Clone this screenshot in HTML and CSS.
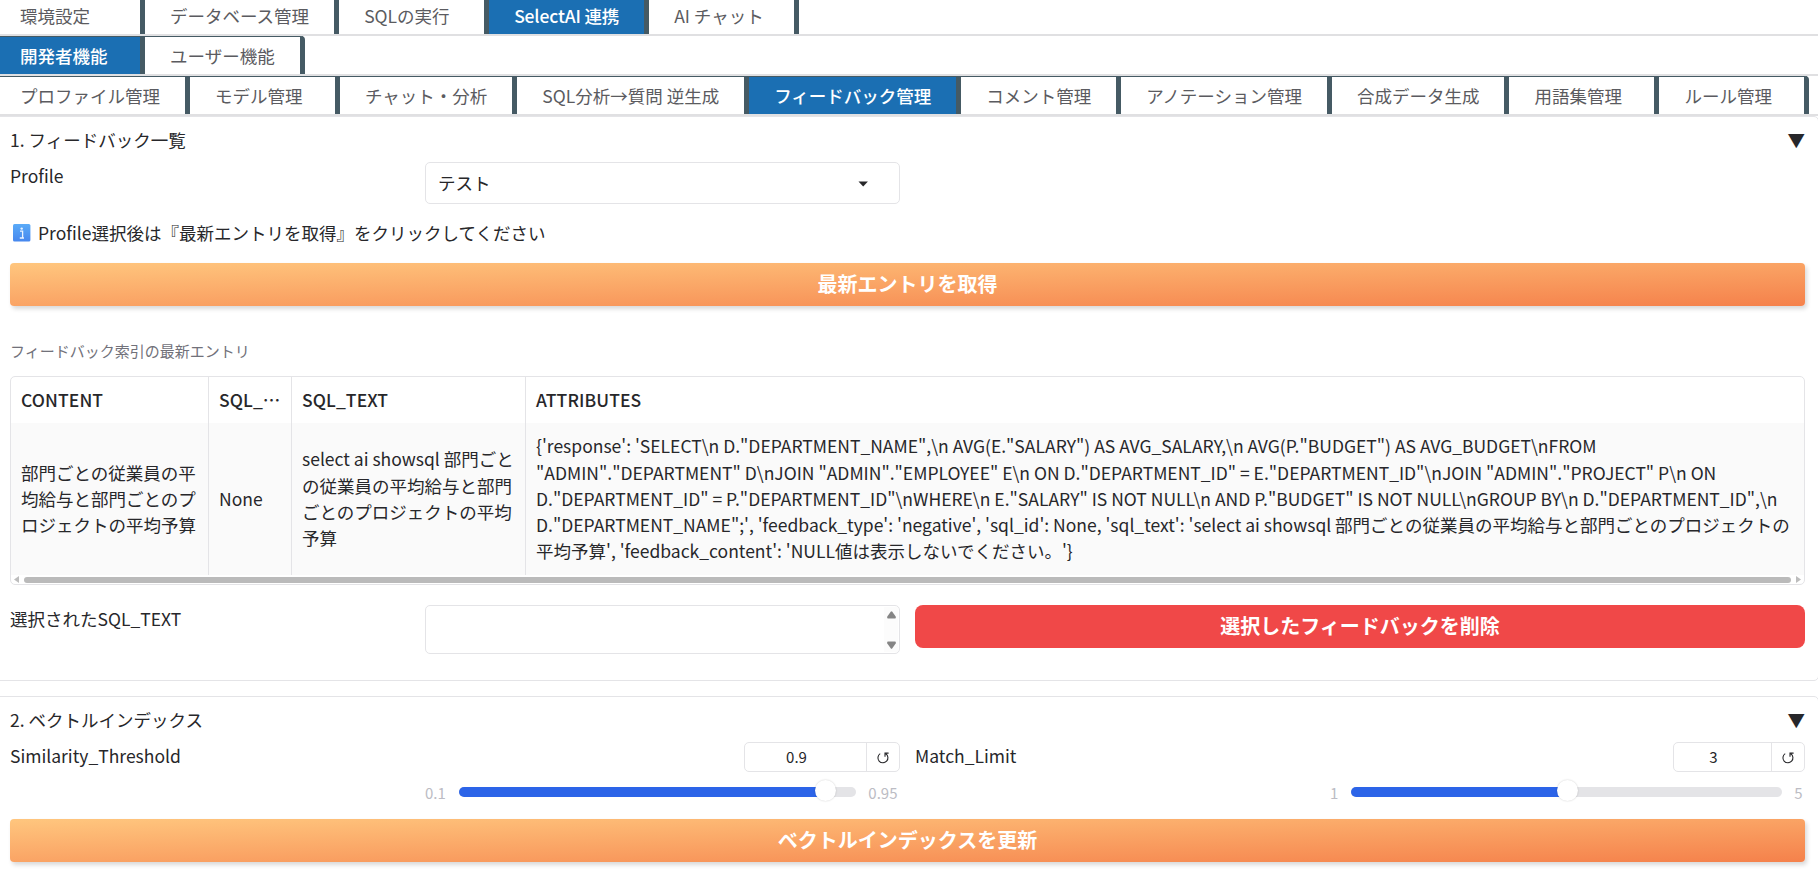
FILE: index.html
```html
<!DOCTYPE html>
<html lang="ja">
<head>
  <meta charset="UTF-8" />
  <meta name="viewport" content="width=device-width, initial-scale=1.0"/>
  <title>SelectAI 連携</title>
  <link rel="stylesheet" href="styles.css">
</head>
<body>
  <div class="app">
    <nav class="tabs first">
      <button class="tab">環境設定</button>
      <button class="tab">データベース管理</button>
      <button class="tab">SQLの実行</button>
      <button class="tab selected">SelectAI 連携</button>
      <button class="tab">AI チャット</button>
    </nav>
    <nav class="tabs">
      <button class="tab selected">開発者機能</button>
      <button class="tab">ユーザー機能</button>
    </nav>
    <nav class="tabs">
      <button class="tab">プロファイル管理</button>
      <button class="tab">モデル管理</button>
      <button class="tab">チャット・分析</button>
      <button class="tab">SQL分析→質問 逆生成</button>
      <button class="tab selected">フィードバック管理</button>
      <button class="tab">コメント管理</button>
      <button class="tab">アノテーション管理</button>
      <button class="tab">合成データ生成</button>
      <button class="tab">用語集管理</button>
      <button class="tab">ルール管理</button>
    </nav>

    <section class="accordion feedback">
      <div class="accordion-head"><span>1. フィードバック一覧</span><span class="arrow">▼</span></div>

      <div class="columns">
        <div class="field">
          <label>Profile</label>
          <div class="dropdown">
            <span>テスト</span>
            <svg class="caret" width="11" height="6" viewBox="0 0 11 6"><path d="M0.5 0.5h9.4L5.2 5.4z" fill="#27272a"/></svg>
          </div>
        </div>
      </div>

      <p class="note">
        <svg class="info" width="18" height="18" viewBox="0 0 18 18">
          <defs>
            <linearGradient id="infoBg" x1="0" y1="0" x2="0" y2="1">
              <stop offset="0" stop-color="#5aabf8"/>
              <stop offset="1" stop-color="#4687ee"/>
            </linearGradient>
          </defs>
          <rect width="17.4" height="17.4" rx="1.5" fill="url(#infoBg)"/>
          <circle cx="8.7" cy="4.6" r="1.2" fill="#eaf3ff"/>
          <path d="M7 7.2h2.6v6.4M6.8 14h4.2" fill="none" stroke="#eaf3ff" stroke-width="1.3"/>
        </svg>
        <span>Profile選択後は『最新エントリを取得』をクリックしてください</span>
      </p>

      <button class="btn primary">最新エントリを取得</button>

      <div class="caption">フィードバック索引の最新エントリ</div>
      <div class="table-wrap">
        <table>
          <colgroup>
            <col class="c1"><col class="c2"><col class="c3"><col>
          </colgroup>
          <thead>
            <tr><th>CONTENT</th><th>SQL_⋯</th><th>SQL_TEXT</th><th>ATTRIBUTES</th></tr>
          </thead>
          <tbody>
            <tr>
              <td>部門ごとの従業員の平均給与と部門ごとのプロジェクトの平均予算</td>
              <td>None</td>
              <td>select ai showsql 部門ごとの従業員の平均給与と部門ごとのプロジェクトの平均予算</td>
              <td>{'response': 'SELECT\n D."DEPARTMENT_NAME",\n AVG(E."SALARY") AS AVG_SALARY,\n AVG(P."BUDGET") AS AVG_BUDGET\nFROM<br>"ADMIN"."DEPARTMENT" D\nJOIN "ADMIN"."EMPLOYEE" E\n ON D."DEPARTMENT_ID" = E."DEPARTMENT_ID"\nJOIN "ADMIN"."PROJECT" P\n ON<br>D."DEPARTMENT_ID" = P."DEPARTMENT_ID"\nWHERE\n E."SALARY" IS NOT NULL\n AND P."BUDGET" IS NOT NULL\nGROUP BY\n D."DEPARTMENT_ID",\n<br>D."DEPARTMENT_NAME";', 'feedback_type': 'negative', 'sql_id': None, 'sql_text': 'select ai showsql 部門ごとの従業員の平均給与と部門ごとのプロジェクトの<br>平均予算', 'feedback_content': 'NULL値は表示しないでください。'}</td>
            </tr>
          </tbody>
        </table>
        <div class="hscroll">
          <svg width="5" height="7" viewBox="0 0 5 7"><path d="M5 0v7L0 3.5z" fill="#bdbdbd"/></svg>
          <div class="thumb"></div>
          <svg width="5" height="7" viewBox="0 0 5 7"><path d="M0 0v7l5-3.5z" fill="#bdbdbd"/></svg>
        </div>
      </div>

      <div class="columns">
        <div class="field">
          <label>選択されたSQL_TEXT</label>
          <div class="textarea">
            <div class="vscroll">
              <svg width="9" height="8" viewBox="0 0 9 8"><path d="M3.7.8Q4.5-.2 5.3.8L8.7 5.5Q9.2 7.3 8 7.5H1Q-.2 7.3.3 5.5z" fill="#858585"/></svg>
              <svg width="9" height="8" viewBox="0 0 9 8"><path d="M3.7 7.2Q4.5 8.2 5.3 7.2L8.7 2.5Q9.2.7 8 .5H1Q-.2.7.3 2.5z" fill="#858585"/></svg>
            </div>
          </div>
        </div>
        <button class="btn stop">選択したフィードバックを削除</button>
      </div>
    </section>

    <section class="accordion vector">
      <div class="accordion-head"><span>2. ベクトルインデックス</span><span class="arrow">▼</span></div>

      <div class="columns sliders">
        <div class="field">
          <label>Similarity_Threshold</label>
          <div class="slider">
            <div class="number">
              <span class="value">0.9</span>
              <span class="reset"><svg width="12" height="12" viewBox="0 0 12 12"><path d="M3.2 1.6A5 5 0 1 0 8.8 1.7M11.6 1.1H8v3.7" fill="none" stroke="#27272a" stroke-width="1.1"/></svg></span>
            </div>
            <div class="range">
              <span>0.1</span>
              <div class="track"><div class="fill" style="width: 92%"></div><div class="knob"></div></div>
              <span>0.95</span>
            </div>
          </div>
        </div>
        <div class="field">
          <label>Match_Limit</label>
          <div class="slider">
            <div class="number small">
              <span class="value">3</span>
              <span class="reset"><svg width="12" height="12" viewBox="0 0 12 12"><path d="M3.2 1.6A5 5 0 1 0 8.8 1.7M11.6 1.1H8v3.7" fill="none" stroke="#27272a" stroke-width="1.1"/></svg></span>
            </div>
            <div class="range">
              <span>1</span>
              <div class="track"><div class="fill" style="width: 50%"></div><div class="knob"></div></div>
              <span>5</span>
            </div>
          </div>
        </div>
      </div>

      <button class="btn primary">ベクトルインデックスを更新</button>
    </section>
  </div>
</body>
</html>
```
FILE: styles.css
```css
* {
  box-sizing: border-box;
}
body {
  margin: 0;
  height: 871px;
  overflow: hidden;
  background: #fff;
  color: #27272a;
  font-family: "Noto Sans CJK JP", sans-serif;
  font-size: 17.5px;
  line-height: 26.25px;
}
button {
  font-family: inherit;
  border: none;
}
.app {
  margin-left: -5px;
  margin-right: -1px;
}

/* tabs */
.tabs {
  display: flex;
  height: 40px;
  border-bottom: 2px solid #e0e0e2;
}
.tabs.first {
  height: 36px;
}
.tab {
  min-width: 150px;
  padding: 0 25px;
  border-top: 1px solid #455a64;
  border-right: 5px solid #455a64;
  background: #fff;
  color: #5b5b60;
  font-size: 17.5px;
  text-align: left;
  white-space: nowrap;
}
.first .tab {
  border-top: none;
  padding-bottom: 3px;
}
.tab:last-child {
  border-top-right-radius: 4px;
}
.first .tab:last-child {
  border-radius: 0;
}
.tab.selected {
  background: #1b6fb3;
  color: #fff;
  font-weight: 500;
}
.first .selected {
  letter-spacing: -0.15px;
}

/* accordions */
.accordion {
  border: 1px solid #e4e4e7;
  border-radius: 5px;
  padding: 9px 13px 0 14px;
}
.feedback {
  height: 565px;
}
.vector {
  height: 190px;
  margin-top: 15px;
}
.accordion-head {
  display: flex;
  justify-content: space-between;
  height: 36px;
  padding-top: 1px;
}
.columns {
  display: grid;
  grid-template-columns: 890px 890px;
  gap: 15px;
}
.field {
  display: grid;
  grid-template-columns: 415px 1fr;
}
.field label {
  padding-top: 1px;
}
.dropdown {
  display: flex;
  align-items: center;
  justify-content: space-between;
  height: 42px;
  padding: 1px 30px 0 12px;
  border: 1px solid #e4e4e7;
  border-radius: 5px;
}
.note {
  display: flex;
  align-items: center;
  gap: 7px;
  height: 26px;
  margin: 16px 0 17px;
  padding-left: 3px;
}
.btn {
  display: block;
  width: 100%;
  height: 43px;
  padding: 0 0 2px;
  color: #fff;
  font-size: 20px;
  font-weight: 700;
  line-height: 30px;
}
.primary {
  border-radius: 4px;
  background: linear-gradient(to bottom right, #ffc67e, #f5814b);
  box-shadow: 2px 3px 4px rgba(0, 0, 0, 0.15);
}
.stop {
  border-radius: 8px;
  background: #f04848;
}

/* table */
.caption {
  margin-top: 33px;
  margin-bottom: 14px;
  color: #71717a;
  font-size: 15px;
  line-height: 23px;
}
.table-wrap {
  height: 209px;
  margin-bottom: 20px;
  border: 1px solid #e4e4e7;
  border-radius: 5px;
  overflow: hidden;
}
table {
  width: 100%;
  table-layout: fixed;
  border-collapse: separate;
  border-spacing: 0;
}
.c1 {
  width: 198px;
}
.c2 {
  width: 83px;
}
.c3 {
  width: 234px;
}
th,
td {
  padding: 10px;
  text-align: left;
  border-right: 1px solid #e4e4e7;
}
th:last-child,
td:last-child {
  border-right: none;
}
th {
  height: 46px;
  font-weight: 500;
  letter-spacing: 0.1px;
  white-space: nowrap;
}
td {
  background: #fafafa;
}
.hscroll {
  display: flex;
  align-items: center;
  gap: 5px;
  height: 10px;
  padding: 0 3px;
}
.thumb {
  flex: 1;
  height: 6px;
  border-radius: 3px;
  background: #bababa;
}
.textarea {
  display: flex;
  justify-content: flex-end;
  height: 49px;
  padding: 1px;
  border: 1px solid #e4e4e7;
  border-radius: 5px;
}
.vscroll {
  display: flex;
  flex-direction: column;
  justify-content: space-between;
  align-items: center;
  width: 14px;
  padding: 4px 0 3px;
  background: #fcfcfc;
}

/* sliders */
.sliders {
  height: 77px;
}
.slider {
  display: flex;
  flex-direction: column;
  align-items: flex-end;
}
.number {
  display: flex;
  width: 156px;
  height: 30px;
  border: 1px solid #e4e4e7;
  border-radius: 5px;
  font-size: 15px;
  line-height: 28px;
}
.number.small {
  width: 132px;
}
.value {
  flex: 1;
  padding-right: 18px;
  text-align: center;
}
.reset {
  display: flex;
  align-items: center;
  justify-content: center;
  width: 33px;
  padding-top: 2px;
  border-left: 1px solid #e4e4e7;
}
.range {
  display: flex;
  align-items: center;
  width: 100%;
  height: 20px;
  margin-top: 10px;
  padding-right: 2.5px;
  color: #bcbcc4;
  font-size: 15px;
}
.range > span {
  padding-top: 3px;
}
.track {
  display: flex;
  align-items: center;
  flex: 1;
  height: 10px;
  margin: 0 12px 0 13px;
  border-radius: 5px;
  background: #e4e4e7;
}
.fill {
  height: 10px;
  border-radius: 5px 0 0 5px;
  background: #2c64e8;
}
.knob {
  flex: none;
  width: 21px;
  height: 21px;
  margin: -4px -10px 0;
  border-radius: 50%;
  background: #fff;
  box-shadow: 0 0 2px rgba(0, 0, 0, 0.2);
}
```
